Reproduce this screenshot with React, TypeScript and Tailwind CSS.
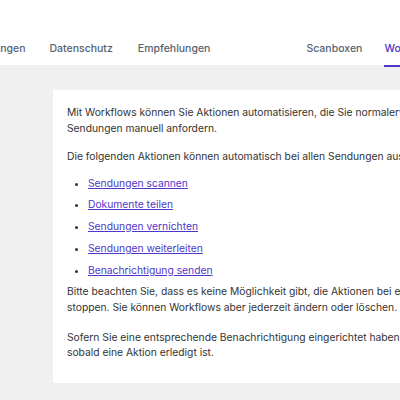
import React from "react";

export default function App() {
  const links = [
    "Sendungen scannen",
    "Dokumente teilen",
    "Sendungen vernichten",
    "Sendungen weiterleiten",
    "Benachrichtigung senden",
  ];
  return (
    <div className="w-[400px] h-[400px] overflow-hidden bg-[#f0f0f0] font-['Inter',sans-serif]">
      <div className="h-[65px] bg-white flex items-end whitespace-nowrap">
        <div className="flex shrink-0 items-end -ml-[42px] text-[10.5px] leading-[16px] font-medium text-[#566270]">
          <div className="shrink-0 pb-[8px]">Einstellungen</div>
          <div className="shrink-0 pb-[8px] ml-[24px]">Datenschutz</div>
          <div className="shrink-0 pb-[8px] ml-[25px]">Empfehlungen</div>
          <div className="shrink-0 pb-[8px] ml-[96px]">Scanboxen</div>
          <div className="shrink-0 pb-[8px] ml-[22px] -mb-[2px] text-[#4f37c8] border-b-2 border-[#4f37c8]">Workflows</div>
        </div>
      </div>
      <div className="pt-[25px] pl-[53px]">
        <div className="bg-white w-[400px] h-[293px] pl-[14px] pt-[15px] text-[10.3px] leading-[15.5px] text-[#333333] whitespace-nowrap">
          <p>Mit Workflows können Sie Aktionen automatisieren, die Sie normalerweise bei</p>
          <p>Sendungen manuell anfordern.</p>
          <p className="mt-[12.5px]">Die folgenden Aktionen können automatisch bei allen Sendungen ausgeführt werden:</p>
          <ul className="mt-[11.5px] pl-[21px] list-disc">
            {links.map((l) => (
              <li key={l} className="mb-[6.3px] marker:text-[#333333]">
                <a href="#" className="text-[#4f37c8] underline">{l}</a>
              </li>
            ))}
          </ul>
          <p>Bitte beachten Sie, dass es keine Möglichkeit gibt, die Aktionen bei einer Sendung zu</p>
          <p>stoppen. Sie können Workflows aber jederzeit ändern oder löschen.</p>
          <p className="mt-[14.5px]">Sofern Sie eine entsprechende Benachrichtigung eingerichtet haben, erhalten Sie</p>
          <p>sobald eine Aktion erledigt ist.</p>
        </div>
      </div>
    </div>
  );
}
